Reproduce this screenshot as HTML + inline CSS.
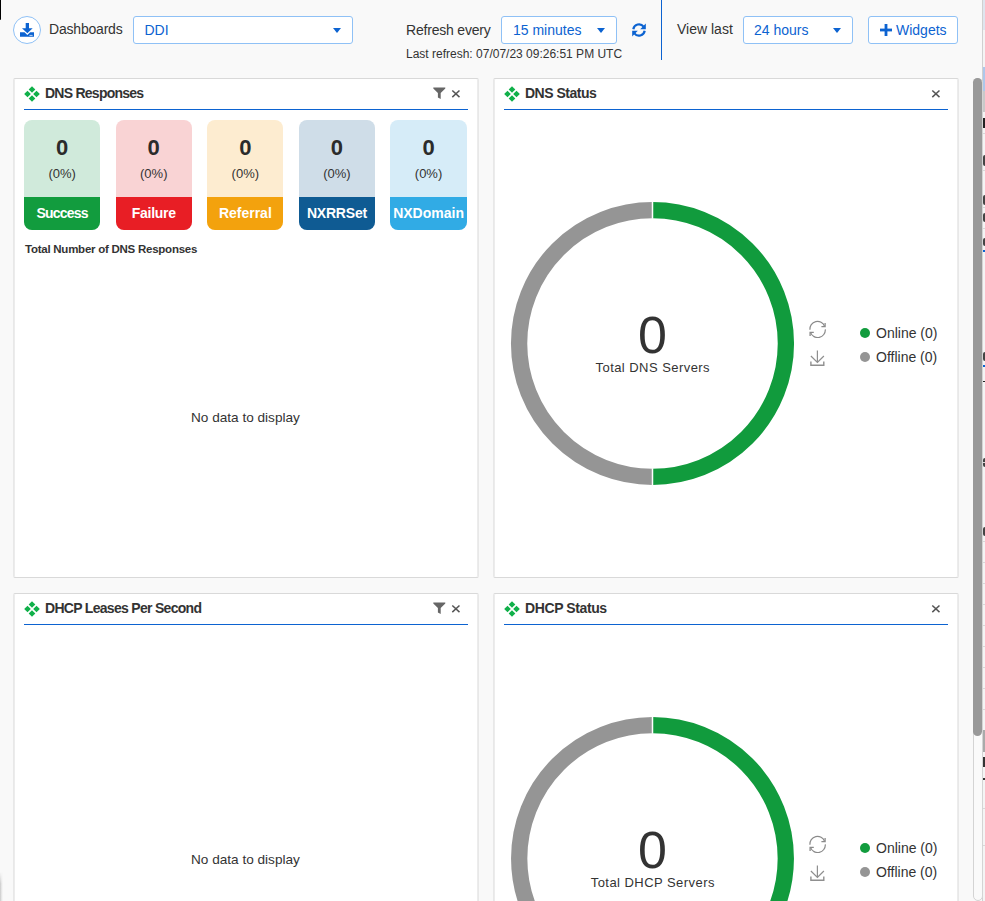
<!DOCTYPE html>
<html><head><meta charset="utf-8">
<style>
*{box-sizing:border-box;margin:0;padding:0}
html,body{width:985px;height:901px;overflow:hidden;background:#f9f9f9;font-family:"Liberation Sans",sans-serif;color:#333}
.a{position:absolute;white-space:nowrap}
.sel{position:absolute;background:#fff;border:1px solid #8fc1f6;border-radius:3px;height:28px;top:16px}
.sel .t{position:absolute;left:12px;top:5px;font-size:14px;color:#0c63d1}
.caret{position:absolute;width:0;height:0;border-left:4px solid transparent;border-right:4px solid transparent;border-top:5px solid #0c63d1}
.panel{position:absolute;background:#fff;border:1px solid;border-color:#d9d9d9 #e8e8e8;box-shadow:inset 1px 0 0 #ececec,inset -1px 0 0 #ececec;border-radius:2px;width:466px;height:500px}
.ttl{position:absolute;font-size:14px;letter-spacing:-0.7px;font-weight:bold;color:#333}
.bl{position:absolute;height:1px;background:#0c63d1;top:30px}
.card{position:absolute;top:41px;width:76.3px;height:110px;border-radius:8px;overflow:hidden}
.card .n{position:absolute;left:0;right:0;top:15px;text-align:center;font-size:22px;font-weight:bold;color:#2b2b2b}
.card .p{position:absolute;left:0;right:0;top:45.5px;text-align:center;font-size:13px;color:#333}
.card .lb{position:absolute;left:0;right:0;bottom:0;height:33px;text-align:center;color:#fff;font-weight:bold;font-size:14px;line-height:33px}
</style></head><body>

<!-- top-left fragment -->
<div class="a" style="left:0;top:0;width:1px;height:20px;background:#000;border-radius:0 0 1px 0"></div>

<div class="a" style="left:0;top:872px;width:3px;height:29px;background:linear-gradient(to right,#c9c9c9,#ececec 60%,#f8f8f8);-webkit-mask-image:linear-gradient(to bottom,transparent,#000 40%)"></div>
<!-- header -->
<div class="a" style="left:13px;top:16px;width:28px;height:28px;border:1px solid #8fc1f6;border-radius:50%;background:#fff"></div>
<svg class="a" style="left:13px;top:16px" width="28" height="28" viewBox="0 0 28 28">
 <rect x="12.7" y="7" width="3.3" height="6" fill="#0c63d1"/>
 <polygon points="9,12.2 19.7,12.2 14.35,17.2" fill="#0c63d1"/>
 <path d="M7 16.3 H11.5 L14.35 19 L17.2 16.3 H21 V20.7 H7 Z" fill="#0c63d1"/>
 <rect x="16.4" y="18.9" width="3.2" height="0.9" fill="#fff" opacity="0.8"/>
</svg>
<div class="a" style="left:49px;top:21px;font-size:14px;letter-spacing:-0.2px">Dashboards</div>
<div class="sel" style="left:133px;width:220px"><span class="t" style="left:10.5px">DDI</span><div class="caret" style="left:198.5px;top:11px"></div></div>

<div class="a" style="left:406px;top:22px;font-size:14px;letter-spacing:-0.2px">Refresh every</div>
<div class="sel" style="left:501px;width:116px"><span class="t" style="left:11px">15 minutes</span><div class="caret" style="left:94.5px;top:11px"></div></div>
<svg class="a" style="left:631px;top:22px" width="16" height="16" viewBox="0 0 16 16">
 <path d="M2.3 7.2 A5.8 5.8 0 0 1 12.6 4.6" fill="none" stroke="#0c63d1" stroke-width="2.2"/>
 <polygon points="14.8,1.6 14.8,7.2 9.2,7.2" fill="#0c63d1"/>
 <path d="M13.7 8.8 A5.8 5.8 0 0 1 3.4 11.4" fill="none" stroke="#0c63d1" stroke-width="2.2"/>
 <polygon points="1.2,14.4 1.2,8.8 6.8,8.8" fill="#0c63d1"/>
</svg>
<div class="a" style="left:406px;top:47px;font-size:12px">Last refresh: 07/07/23 09:26:51 PM UTC</div>
<div class="a" style="left:661px;top:0;width:1px;height:60px;background:#0c63d1"></div>

<div class="a" style="left:677px;top:21px;font-size:14px">View last</div>
<div class="sel" style="left:743px;width:110px"><span class="t" style="left:10px">24 hours</span><div class="caret" style="left:88.5px;top:11px"></div></div>
<div class="sel" style="left:868px;width:90px">
 <svg class="a" style="left:10.5px;top:7px" width="13" height="13" viewBox="0 0 13 13"><rect x="4.6" y="0" width="2.8" height="12" fill="#0c63d1"/><rect x="0" y="4.6" width="12" height="2.8" fill="#0c63d1"/></svg>
 <span class="t" style="left:27px">Widgets</span>
</div>

<!-- Panel 1 -->
<div class="panel" style="left:13px;top:78px">
 <svg class="a" style="left:10px;top:7px" width="16" height="16" viewBox="0 0 16 16" fill="#10b04a">
  <polygon points="8,0.2 11.3,3.5 8,6.8 4.7,3.5"/><polygon points="8,9.2 11.3,12.5 8,15.8 4.7,12.5"/>
  <polygon points="3.5,4.7 6.8,8 3.5,11.3 0.2,8"/><polygon points="12.5,4.7 15.8,8 12.5,11.3 9.2,8"/>
 </svg>
 <div class="ttl" style="left:31px;top:6px;letter-spacing:-0.75px">DNS Responses</div>
 <svg class="a" style="left:418.5px;top:8px" width="13" height="13" viewBox="0 0 13 13"><path d="M0.3 0.6 H12.3 V1.4 L7.7 6 V12 L4.9 10.4 V6 L0.3 1.4 Z" fill="#666"/></svg>
 <svg class="a" style="left:437px;top:10px" width="10" height="10" viewBox="0 0 10 10"><path d="M1.3 1.5 L8.5 8.1 M8.5 1.5 L1.3 8.1" stroke="#555" stroke-width="1.5"/></svg>
 <div class="bl" style="left:10px;width:444px"></div>
 <div class="card" style="left:10px;background:#d0eadb"><div class="n">0</div><div class="p">(0%)</div><div class="lb" style="background:#129c3e;letter-spacing:-0.8px">Success</div></div>
 <div class="card" style="left:101.6px;background:#f9d3d4"><div class="n">0</div><div class="p">(0%)</div><div class="lb" style="background:#e81e25;letter-spacing:-0.3px">Failure</div></div>
 <div class="card" style="left:193.2px;background:#fdecd0"><div class="n">0</div><div class="p">(0%)</div><div class="lb" style="background:#f3a20d">Referral</div></div>
 <div class="card" style="left:284.8px;background:#cfdde8"><div class="n">0</div><div class="p">(0%)</div><div class="lb" style="background:#0f5b93;letter-spacing:-0.2px">NXRRSet</div></div>
 <div class="card" style="left:376.4px;background:#d6ecf8"><div class="n">0</div><div class="p">(0%)</div><div class="lb" style="background:#31abe5">NXDomain</div></div>
 <div class="a" style="left:11px;top:164px;font-size:11.5px;font-weight:bold;letter-spacing:-0.25px">Total Number of DNS Responses</div>
 <div class="a" style="left:177px;top:331px;font-size:13.6px">No data to display</div>
</div>

<!-- Panel 2 -->
<div class="panel" style="left:493px;top:78px">
 <svg class="a" style="left:10px;top:7px" width="16" height="16" viewBox="0 0 16 16" fill="#10b04a">
  <polygon points="8,0.2 11.3,3.5 8,6.8 4.7,3.5"/><polygon points="8,9.2 11.3,12.5 8,15.8 4.7,12.5"/>
  <polygon points="3.5,4.7 6.8,8 3.5,11.3 0.2,8"/><polygon points="12.5,4.7 15.8,8 12.5,11.3 9.2,8"/>
 </svg>
 <div class="ttl" style="left:31px;top:6px;letter-spacing:-0.5px">DNS Status</div>
 <svg class="a" style="left:437px;top:10px" width="10" height="10" viewBox="0 0 10 10"><path d="M1.3 1.5 L8.5 8.1 M8.5 1.5 L1.3 8.1" stroke="#555" stroke-width="1.5"/></svg>
 <div class="bl" style="left:10px;width:444px"></div>
</div>

<!-- Panel 3 -->
<div class="panel" style="left:13px;top:593px;height:330px">
 <svg class="a" style="left:10px;top:7px" width="16" height="16" viewBox="0 0 16 16" fill="#10b04a">
  <polygon points="8,0.2 11.3,3.5 8,6.8 4.7,3.5"/><polygon points="8,9.2 11.3,12.5 8,15.8 4.7,12.5"/>
  <polygon points="3.5,4.7 6.8,8 3.5,11.3 0.2,8"/><polygon points="12.5,4.7 15.8,8 12.5,11.3 9.2,8"/>
 </svg>
 <div class="ttl" style="left:31px;top:6px">DHCP Leases Per Second</div>
 <svg class="a" style="left:418.5px;top:8px" width="13" height="13" viewBox="0 0 13 13"><path d="M0.3 0.6 H12.3 V1.4 L7.7 6 V12 L4.9 10.4 V6 L0.3 1.4 Z" fill="#666"/></svg>
 <svg class="a" style="left:437px;top:10px" width="10" height="10" viewBox="0 0 10 10"><path d="M1.3 1.5 L8.5 8.1 M8.5 1.5 L1.3 8.1" stroke="#555" stroke-width="1.5"/></svg>
 <div class="bl" style="left:10px;width:444px"></div>
 <div class="a" style="left:177px;top:258px;font-size:13.6px">No data to display</div>
</div>

<!-- Panel 4 -->
<div class="panel" style="left:493px;top:593px;height:330px">
 <svg class="a" style="left:10px;top:7px" width="16" height="16" viewBox="0 0 16 16" fill="#10b04a">
  <polygon points="8,0.2 11.3,3.5 8,6.8 4.7,3.5"/><polygon points="8,9.2 11.3,12.5 8,15.8 4.7,12.5"/>
  <polygon points="3.5,4.7 6.8,8 3.5,11.3 0.2,8"/><polygon points="12.5,4.7 15.8,8 12.5,11.3 9.2,8"/>
 </svg>
 <div class="ttl" style="left:31px;top:6px;letter-spacing:-0.4px">DHCP Status</div>
 <svg class="a" style="left:437px;top:10px" width="10" height="10" viewBox="0 0 10 10"><path d="M1.3 1.5 L8.5 8.1 M8.5 1.5 L1.3 8.1" stroke="#555" stroke-width="1.5"/></svg>
 <div class="bl" style="left:10px;width:444px"></div>
</div>

<!-- donuts -->
<svg class="a" style="left:0;top:0" width="985" height="901" viewBox="0 0 985 901">
 <path d="M652.5 210.1 A133.4 133.4 0 0 1 652.5 476.9" fill="none" stroke="#119b3d" stroke-width="16.3"/>
 <path d="M652.5 476.9 A133.4 133.4 0 0 1 652.5 210.1" fill="none" stroke="#959595" stroke-width="16.3"/>
 <line x1="652.5" y1="200.75" x2="652.5" y2="218.75" stroke="#fff" stroke-width="1.5"/>
 <line x1="652.5" y1="468.25" x2="652.5" y2="486.25" stroke="#fff" stroke-width="1.5"/>
 <text x="652.5" y="352.5" text-anchor="middle" font-family="Liberation Sans" font-size="52" fill="#333">0</text>
 <text x="652.8" y="372.2" text-anchor="middle" font-family="Liberation Sans" font-size="13" letter-spacing="0.45" fill="#333">Total DNS Servers</text>
</svg>
<svg class="a" style="left:808px;top:320.0px" width="19" height="18" viewBox="0 0 19 18">
 <path d="M1.9 9.8 A7.6 7.6 0 0 1 16.6 6.4" fill="none" stroke="#8a8a8a" stroke-width="1.2"/>
 <path d="M13.4 6.7 H17.1 V2.9" fill="none" stroke="#8a8a8a" stroke-width="1.3"/>
 <path d="M17.3 9.4 A7.6 7.6 0 0 1 2.6 12.6" fill="none" stroke="#8a8a8a" stroke-width="1.2"/>
 <path d="M5.8 12.3 H2.1 V16.1" fill="none" stroke="#8a8a8a" stroke-width="1.3"/>
</svg>
<svg class="a" style="left:809px;top:349.5px" width="17" height="17" viewBox="0 0 17 17">
 <path d="M8.4 0.6 V12.4 M1.9 6.0 L8.4 12.4 L14.9 6.0" fill="none" stroke="#8f8f8f" stroke-width="1.2"/>
 <path d="M1.9 11.6 V15.2 H14.8 V11.6" fill="none" stroke="#8f8f8f" stroke-width="1.4"/>
</svg>
<div class="a" style="left:860.3px;top:327.8px;width:10px;height:10px;border-radius:50%;background:#129c3e"></div>
<div class="a" style="left:860.3px;top:351.6px;width:10px;height:10px;border-radius:50%;background:#959595"></div>
<div class="a" style="left:876px;top:325.0px;font-size:14px">Online (0)</div>
<div class="a" style="left:876px;top:348.8px;font-size:14px">Offline (0)</div>
<svg class="a" style="left:0;top:0" width="985" height="901" viewBox="0 0 985 901">
 <path d="M652.5 725.1 A133.4 133.4 0 0 1 652.5 991.9" fill="none" stroke="#119b3d" stroke-width="16.3"/>
 <path d="M652.5 991.9 A133.4 133.4 0 0 1 652.5 725.1" fill="none" stroke="#959595" stroke-width="16.3"/>
 <line x1="652.5" y1="715.75" x2="652.5" y2="733.75" stroke="#fff" stroke-width="1.5"/>
 <line x1="652.5" y1="983.25" x2="652.5" y2="1001.25" stroke="#fff" stroke-width="1.5"/>
 <text x="652.5" y="867.5" text-anchor="middle" font-family="Liberation Sans" font-size="52" fill="#333">0</text>
 <text x="652.8" y="887.2" text-anchor="middle" font-family="Liberation Sans" font-size="13" letter-spacing="0.45" fill="#333">Total DHCP Servers</text>
</svg>
<svg class="a" style="left:808px;top:835.0px" width="19" height="18" viewBox="0 0 19 18">
 <path d="M1.9 9.8 A7.6 7.6 0 0 1 16.6 6.4" fill="none" stroke="#8a8a8a" stroke-width="1.2"/>
 <path d="M13.4 6.7 H17.1 V2.9" fill="none" stroke="#8a8a8a" stroke-width="1.3"/>
 <path d="M17.3 9.4 A7.6 7.6 0 0 1 2.6 12.6" fill="none" stroke="#8a8a8a" stroke-width="1.2"/>
 <path d="M5.8 12.3 H2.1 V16.1" fill="none" stroke="#8a8a8a" stroke-width="1.3"/>
</svg>
<svg class="a" style="left:809px;top:864.5px" width="17" height="17" viewBox="0 0 17 17">
 <path d="M8.4 0.6 V12.4 M1.9 6.0 L8.4 12.4 L14.9 6.0" fill="none" stroke="#8f8f8f" stroke-width="1.2"/>
 <path d="M1.9 11.6 V15.2 H14.8 V11.6" fill="none" stroke="#8f8f8f" stroke-width="1.4"/>
</svg>
<div class="a" style="left:860.3px;top:842.8px;width:10px;height:10px;border-radius:50%;background:#129c3e"></div>
<div class="a" style="left:860.3px;top:866.6px;width:10px;height:10px;border-radius:50%;background:#959595"></div>
<div class="a" style="left:876px;top:840.0px;font-size:14px">Online (0)</div>
<div class="a" style="left:876px;top:863.8px;font-size:14px">Offline (0)</div>

<!-- right strip -->
<div class="a" style="left:982px;top:0;width:1px;height:901px;background:#d0d0d0"></div>
<div class="a" style="left:983px;top:0;width:2px;height:901px;background:#f4f4f4"></div>
<div class="a" style="left:983px;top:0;width:2px;height:30px;background:#dfe5ee"></div>
<div class="a" style="left:983px;top:67px;width:2px;height:24px;background:#aec7ea"></div>
<div class="a" style="left:983px;top:91px;width:2px;height:21px;background:#c9c9c9"></div>
<div class="a" style="left:983px;top:118px;width:2px;height:10px;background:#222"></div>
<div class="a" style="left:983px;top:155px;width:2px;height:11px;background:#444;border-radius:2px 0 0 2px"></div>
<div class="a" style="left:983px;top:195px;width:2px;height:10px;background:#444;border-radius:2px 0 0 2px"></div>
<div class="a" style="left:983px;top:213px;width:2px;height:9px;background:#444;border-radius:2px 0 0 2px"></div>
<div class="a" style="left:983px;top:238px;width:2px;height:8px;background:#444;border-radius:2px 0 0 2px"></div>
<div class="a" style="left:983px;top:250px;width:2px;height:2px;background:#0c63d1"></div>
<div class="a" style="left:983px;top:352px;width:2px;height:9px;background:#444;border-radius:2px 0 0 2px"></div>
<div class="a" style="left:983px;top:365px;width:2px;height:2px;background:#0c63d1"></div>
<div class="a" style="left:983px;top:381px;width:2px;height:1px;background:#222"></div>
<div class="a" style="left:983px;top:458px;width:2px;height:9px;background:#444;border-radius:2px 0 0 2px"></div>
<div class="a" style="left:983px;top:527px;width:2px;height:9px;background:#444;border-radius:2px 0 0 2px"></div>
<div class="a" style="left:983px;top:730px;width:2px;height:22px;background:#aaa"></div>
<div class="a" style="left:983px;top:757px;width:2px;height:10px;background:#333"></div>
<div class="a" style="left:983px;top:778px;width:2px;height:2px;background:#333"></div>
<div class="a" style="left:983px;top:133px;width:2px;height:1px;background:#d8d8d8"></div>
<div class="a" style="left:983px;top:170px;width:2px;height:1px;background:#d8d8d8"></div>
<div class="a" style="left:983px;top:207px;width:2px;height:1px;background:#d8d8d8"></div>
<div class="a" style="left:983px;top:228px;width:2px;height:1px;background:#d8d8d8"></div>
<div class="a" style="left:983px;top:462px;width:2px;height:1px;background:#d8d8d8"></div>
<div class="a" style="left:983px;top:541px;width:2px;height:1px;background:#d8d8d8"></div>
<div class="a" style="left:983px;top:562px;width:2px;height:1px;background:#d8d8d8"></div>
<div class="a" style="left:983px;top:583px;width:2px;height:1px;background:#d8d8d8"></div>
<div class="a" style="left:983px;top:604px;width:2px;height:1px;background:#d8d8d8"></div>
<div class="a" style="left:983px;top:625px;width:2px;height:1px;background:#d8d8d8"></div>
<div class="a" style="left:983px;top:646px;width:2px;height:1px;background:#d8d8d8"></div>
<div class="a" style="left:983px;top:667px;width:2px;height:1px;background:#d8d8d8"></div>
<div class="a" style="left:983px;top:688px;width:2px;height:1px;background:#d8d8d8"></div>
<div class="a" style="left:983px;top:709px;width:2px;height:1px;background:#d8d8d8"></div>
<div class="a" style="left:983px;top:808px;width:2px;height:1px;background:#d8d8d8"></div>
<div class="a" style="left:983px;top:845px;width:2px;height:1px;background:#d8d8d8"></div>
<!-- scrollbar -->
<div class="a" style="left:973px;top:78px;width:9.5px;height:823px;border:1px solid #d4d4d4;border-radius:5px;background:#fafafa"></div>
<div class="a" style="left:973px;top:78px;width:9px;height:658px;border-radius:4.5px;background:#999"></div>

</body></html>
